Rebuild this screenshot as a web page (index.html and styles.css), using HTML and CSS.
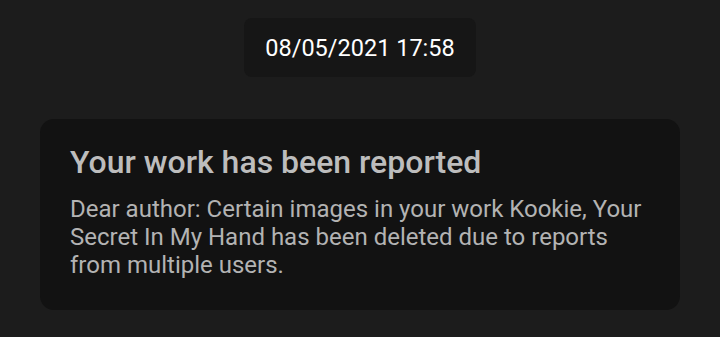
FILE: index.html
```html
<!DOCTYPE html>
<html lang="en">

<head>
    <meta charset="UTF-8">
    <meta name="viewport" content="width=device-width, initial-scale=1.0">
    <title>Notice</title>
    <link rel="stylesheet" href="styles.css">
</head>

<body>
    <div class="page">
        <div class="time">08/05/2021 17:58</div>
        <div class="card">
            <h2 class="title">Your work has been reported</h2>
            <p class="text">Dear author: Certain images in your work Kookie, Your Secret In My Hand has been deleted due to reports from multiple users.</p>
        </div>
    </div>
</body>

</html>
```

FILE: styles.css
```css
body {
    margin: 0;
    background-color: #1c1c1c;
    font-family: Roboto, "Liberation Sans", sans-serif;
}

.page {
    display: flex;
    flex-direction: column;
    align-items: center;
    padding: 18px 40px 0;
}

.time {
    width: 232px;
    height: 59px;
    display: flex;
    justify-content: center;
    align-items: center;
    background-color: #161616;
    border-radius: 8px;
    color: #ffffff;
    font-size: 23.5px;
}

.card {
    align-self: stretch;
    margin-top: 42px;
    height: 191px;
    box-sizing: border-box;
    padding: 25px 30px 0;
    background-color: #121212;
    border-radius: 14px;
}

.title {
    margin: 0;
    color: #bdbdbd;
    font-size: 32px;
    font-weight: 500;
    line-height: 36px;
}

.text {
    margin: 15px 0 0;
    color: #b3b3b3;
    font-size: 24px;
    line-height: 28px;
}
```
